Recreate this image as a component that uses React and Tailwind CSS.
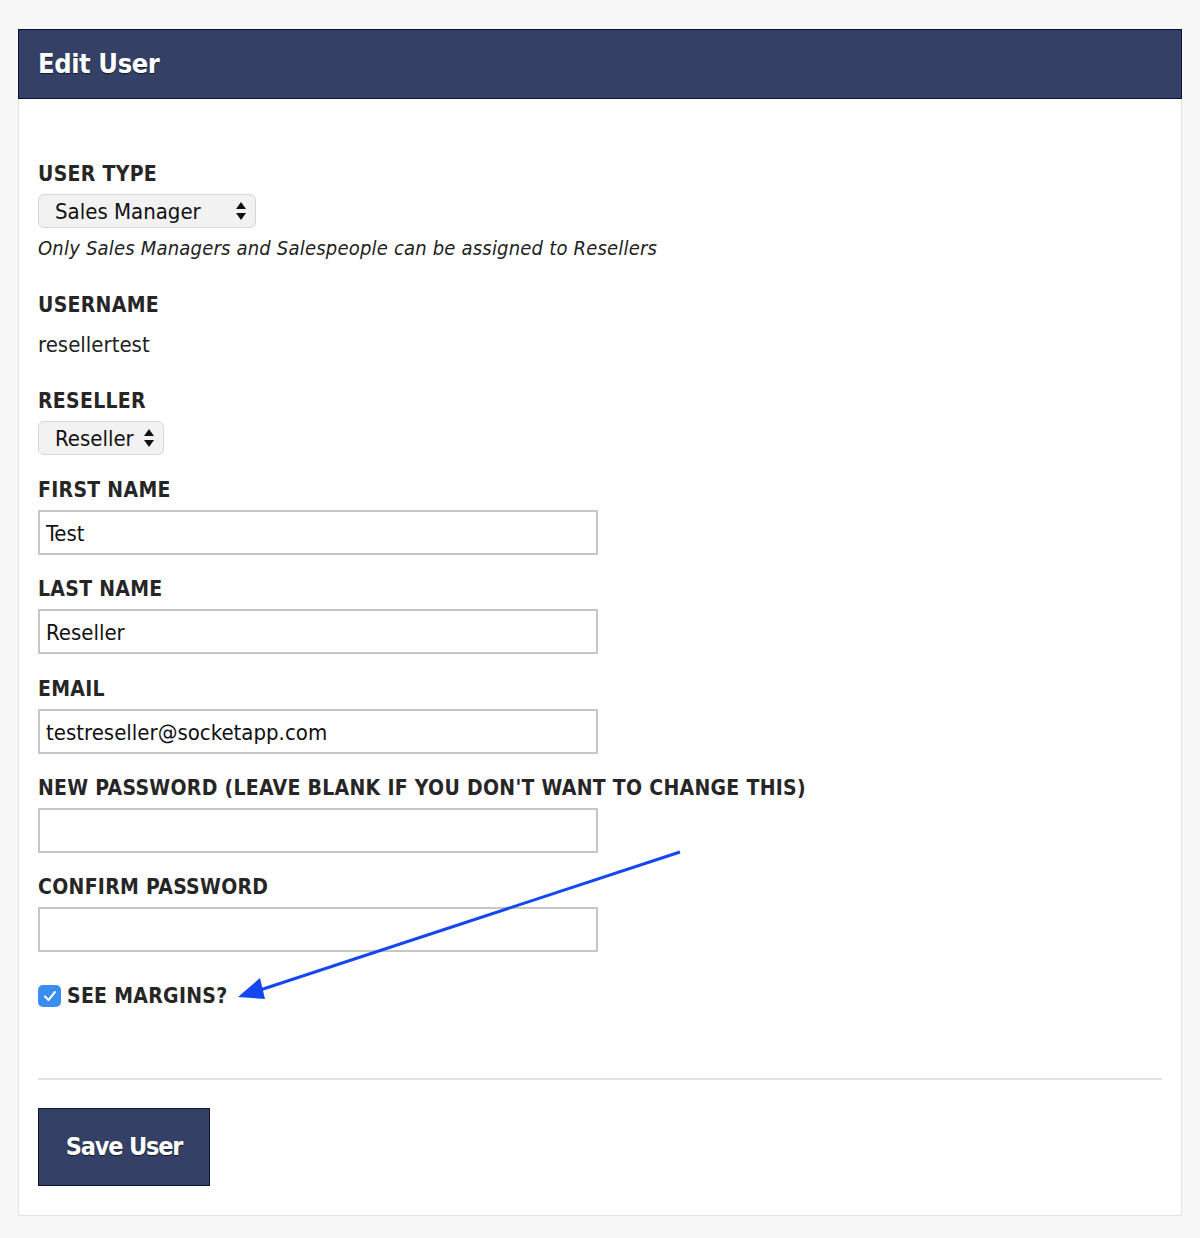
const font = "font-['DejaVu_Sans_Condensed','DejaVu_Sans',sans-serif]";

function Label({ children }) {
  return (
    <div className="text-[21px] leading-[24px] font-bold text-[#262626] tracking-[0.3px]">
      {children}
    </div>
  );
}

function SelectBox({ value, width }) {
  return (
    <div
      className={`mt-2 flex h-[34px] items-center justify-between rounded-[6px] border border-[#d6d6d6] bg-[#f2f2f2] pl-[16px] pr-[8px] text-[22px] text-[#111] ${width}`}
    >
      <span>{value}</span>
      <svg width="12" height="20" viewBox="0 0 12 20">
        <path d="M6 1 L11 8 H1 Z" fill="#111" />
        <path d="M6 19 L11 12 H1 Z" fill="#111" />
      </svg>
    </div>
  );
}

function TextField({ label, value, first }) {
  return (
    <div className={first ? "mt-[23px]" : "mt-[22px]"}>
      <Label>{label}</Label>
      <div className="mt-2 flex h-[45px] w-[560px] items-center border-2 border-[#c6c6c6] bg-white pl-[6px] pt-[2px] text-[22px] text-[#111]">
        {value}
      </div>
    </div>
  );
}

export default function App() {
  return (
    <div className={`min-h-[1238px] bg-[#f7f7f7] pt-[29px] pb-[22px] ${font}`}>
      <div className="relative mx-[18px] border border-t-0 border-[#e2e2e2] bg-white">
        {/* Header */}
        <div className="flex h-[70px] items-center border border-[#0e1438] bg-[#344066] px-[19px] -mx-px">
          <h1 className="text-[27px] font-bold tracking-[-0.4px] text-white [text-shadow:0_1px_1px_rgba(0,0,0,0.6)]">
            Edit User
          </h1>
        </div>

        {/* Body */}
        <div className="px-[19px] pt-[63px] pb-[29px]">
          <Label>USER TYPE</Label>
          <SelectBox value="Sales Manager" width="w-[218px]" />
          <div className="mt-2 text-[20px] leading-[24px] italic text-[#222] tracking-[0.2px]">
            Only Sales Managers and Salespeople can be assigned to Resellers
          </div>

          <div className="mt-[33px]">
            <Label>USERNAME</Label>
            <div className="mt-[15px] text-[22px] leading-[26px] text-[#222]">resellertest</div>
          </div>

          <div className="mt-[31px]">
            <Label>RESELLER</Label>
            <SelectBox value="Reseller" width="w-[126px]" />
          </div>

          <TextField label="FIRST NAME" value="Test" first />
          <TextField label="LAST NAME" value="Reseller" />
          <TextField label="EMAIL" value="testreseller@socketapp.com" first />
          <TextField label="NEW PASSWORD (LEAVE BLANK IF YOU DON'T WANT TO CHANGE THIS)" value="" />
          <TextField label="CONFIRM PASSWORD" value="" />

          <div className="mt-[32px] flex items-center gap-[6px]">
            <div className="flex h-[22px] w-[23px] items-center justify-center rounded-[5px] bg-[#3a8ef2]">
              <svg width="14" height="12" viewBox="0 0 14 12">
                <path d="M2 6.5 L5.5 10 L12 2" fill="none" stroke="white" strokeWidth="2" strokeLinecap="round" strokeLinejoin="round" />
              </svg>
            </div>
            <Label>SEE MARGINS?</Label>
          </div>

          <div className="mt-[70px] h-[2px] bg-[#e4e4e4]" />

          <button className="mt-[28px] flex h-[78px] w-[172px] items-center justify-center border border-[#0e1438] bg-[#344066] text-[25px] font-bold tracking-[-1.2px] text-white [text-shadow:0_1px_1px_rgba(0,0,0,0.6)]">
            Save User
          </button>
        </div>

        {/* Annotation arrow */}
        <svg className="pointer-events-none absolute left-0 top-0" width="1164" height="1200">
          <line x1="661" y1="823" x2="238" y2="962" stroke="#1447f0" strokeWidth="3" />
          <path d="M219 968 L241 949 L246 970 Z" fill="#1447f0" />
        </svg>
      </div>
    </div>
  );
}
